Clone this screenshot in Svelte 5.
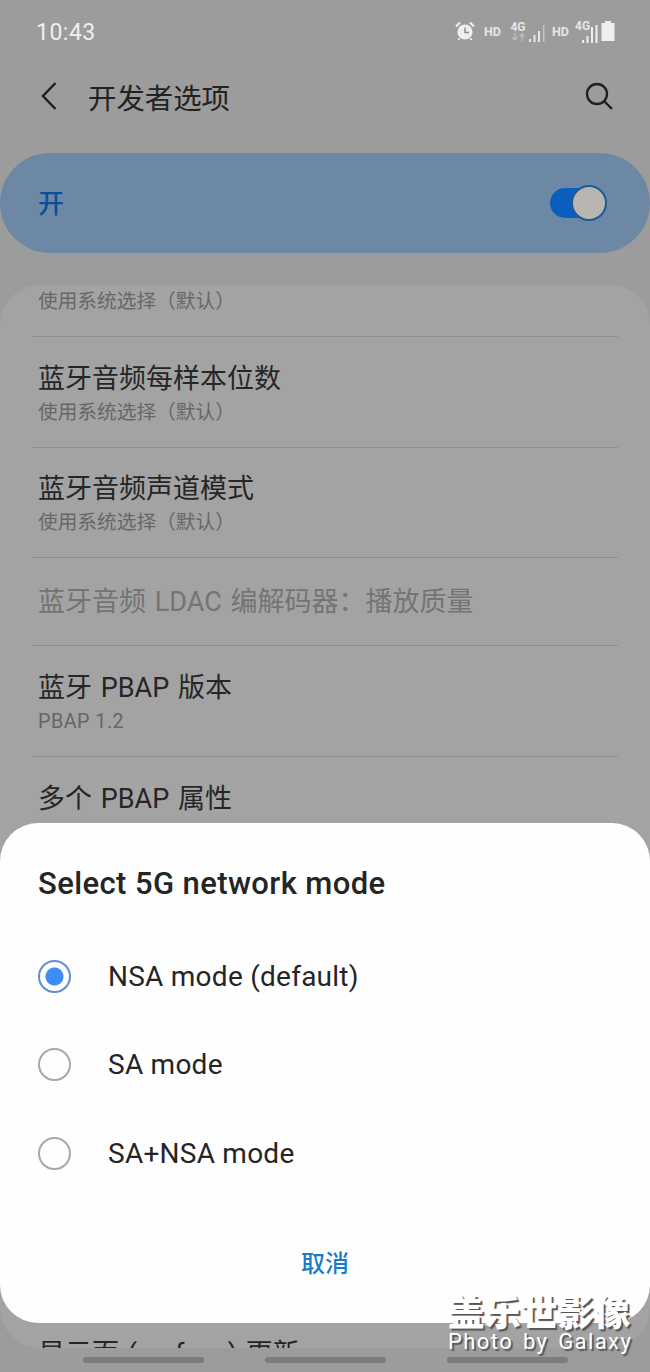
<script>
  const rows = [
    { title: '蓝牙音频每样本位数', sub: '使用系统选择（默认）' },
    { title: '蓝牙音频声道模式', sub: '使用系统选择（默认）', tight: true },
    { title: '蓝牙音频 LDAC 编解码器：播放质量', disabled: true },
    { title: '蓝牙 PBAP 版本', sub: 'PBAP 1.2', latin: true },
    { title: '多个 PBAP 属性', sub: '' }
  ];
  const modes = ['NSA mode (default)', 'SA mode', 'SA+NSA mode'];
  let selected = $state(0);
</script>

<div class="screen">
  <div class="status">
    <span class="time">10:43</span>
    <div class="icons">
      <svg class="alarm" width="20" height="20" viewBox="0 0 20 20">
        <circle cx="10" cy="11" r="7.6" fill="#efefef"/>
        <path d="M1 5.500 5 1.500M19 5.500 15 1.500M4.500 17.500 3.500 19M15.500 17.500 16.500 19" stroke="#efefef" stroke-width="2.200" fill="none"/>
        <path d="M10 6.500V11.500H14" stroke="#8f8f8f" stroke-width="1.500" fill="none"/>
      </svg>
      <span class="hd first">HD</span>
      <div class="net">
        <span class="g">4G</span>
        <svg width="15" height="8" viewBox="0 0 15 8"><path d="M4 0V7M1.500 4.500 4 7 6.500 4.500" stroke="#bdbdbd" stroke-width="1.400" fill="none"/><path d="M11 8V1M8.500 3.500 11 1 13.500 3.500" stroke="#bdbdbd" stroke-width="1.400" fill="none"/></svg>
      </div>
      <svg class="bars" width="18" height="18" viewBox="0 0 18 18"><path d="M1 18V15H3V18ZM5.500 18V11H7.500V18ZM10 18V7H12V18Z" fill="#e6e6e6"/><path d="M15 18V1H16.500V18Z" fill="#c4c4c4"/></svg>
      <span class="hd second">HD</span>
      <div class="net overlap">
        <span class="g">4G</span>
        <svg class="bars2" width="18" height="19" viewBox="0 0 18 19"><path d="M1 19V16H3V19ZM5.500 19V12H7.500V19ZM10 19V3H12V19ZM14.500 19V1H16.500V19Z" fill="#efefef"/></svg>
      </div>
      <svg class="battery" width="14" height="20" viewBox="0 0 14 20"><path d="M4 0H10V2H13.500V20H.5V2H4Z" fill="#efefef"/></svg>
    </div>
  </div>

  <header class="bar">
    <svg class="back" width="18" height="30" viewBox="0 0 18 30"><path d="M15.500 2 3 15 15.500 28" stroke="#1f1f1f" stroke-width="2.400" fill="none"/></svg>
    <h1>开发者选项</h1>
    <svg class="search" width="28" height="28" viewBox="0 0 28 28"><circle cx="12" cy="12" r="10" stroke="#1f1f1f" stroke-width="2.300" fill="none"/><path d="M19.500 19.500 27 27" stroke="#1f1f1f" stroke-width="2.400" fill="none"/></svg>
  </header>

  <div class="master">
    <span>开</span>
    <div class="toggle"><div class="thumb"></div></div>
  </div>

  <section class="list">
    <div class="row partial"><span class="sub">使用系统选择（默认）</span></div>
    {#each rows as row}
      <div class="row" class:short={row.disabled} class:tight={row.tight}>
        <span class="title" class:off={row.disabled}>{row.title}</span>
        {#if !row.disabled}<span class="sub" class:latin={row.latin}>{row.sub}</span>{/if}
      </div>
    {/each}
    <div class="hidden-rows"></div>
    <div class="row last"><span class="title">显示面 (surface) 更新</span></div>
  </section>

  <nav class="navbar">
    <i></i><i></i><i></i>
  </nav>

  <div class="sheet">
    <h2>Select 5G network mode</h2>
    {#each modes as mode, i}
      <button class="mode" onclick={() => (selected = i)}>
        <span class="radio" class:on={selected === i}></span>
        <span>{mode}</span>
      </button>
    {/each}
    <button class="cancel">取消</button>
  </div>

  <div class="mark">
    <div class="cn">盖乐世影像</div>
    <div class="en">Photo by Galaxy</div>
  </div>
</div>

<style>
  :global(body) { margin: 0; background: #9c9c9c; }
  .screen {
    position: relative; width: 650px; height: 1372px; overflow: hidden; background: #9c9c9c;
    display: flex; flex-direction: column;
    font-family: Roboto, "Noto Sans CJK SC", sans-serif;
  }
  .status { height: 62px; display: flex; justify-content: space-between; align-items: center; padding: 0 35px 0 36px; box-sizing: border-box; flex: none; }
  .time { font-size: 23px; color: #efefef; letter-spacing: .5px; padding-top: 3px; }
  .icons { display: flex; align-items: center; height: 24px; }
  .hd { font-size: 12.500px; font-weight: 700; color: #e6e6e6; width: 18px; }
  .hd.first { margin-left: 9px; }
  .hd.second { margin-left: 6px; }
  .net { position: relative; display: flex; flex-direction: column; align-items: center; margin-left: 8px; width: 16px; }
  .net .g { font-size: 12px; font-weight: 700; color: #e6e6e6; line-height: 12px; }
  .net svg { display: block; }
  .overlap { margin-left: 3px; width: 24px; align-items: flex-start; height: 24px; padding-left: 2px; box-sizing: border-box; }
  .overlap .g { margin-top: 1px; }
  .bars { margin-left: 2px; margin-top: 4px; }
  .bars2 { position: absolute; left: 8px; top: 5px; }
  .alarm { margin-top: -1px; }
  .battery { margin-left: 4px; }
  .bar { height: 68px; display: flex; align-items: center; padding: 0 37px 0 40px; flex: none; }
  .back { flex: none; }
  h1 { margin: 0 0 0 30px; font-size: 28.400px; font-weight: 400; color: #222; flex: 1; }
  .search { flex: none; }
  .master {
    margin-top: 23px; height: 100px; flex: none; border-radius: 50px; background: #6d88a5;
    display: flex; align-items: center; justify-content: space-between; padding: 0 46px 0 38px;
  }
  .master span { font-size: 26px; line-height: 36px; font-weight: 500; color: #0b4f9c; padding-top: 2px; }
  .toggle { position: relative; width: 54px; height: 30px; border-radius: 15px; background: #0a5fbe; }
  .thumb { position: absolute; right: -3px; top: -3px; width: 32px; height: 32px; border-radius: 50%; background: #b9b6b2; border: 2px solid #1f5a96; }
  .list {
    margin-top: 32px; height: 1063px; flex: none; background: #a3a3a3; border-radius: 40px;
    overflow: hidden; display: flex; flex-direction: column; padding: 0 32px; box-sizing: border-box;
  }
  .row {
    height: 111px; box-sizing: border-box; padding: 1px 6px 0; border-top: 1px solid #8f8f8f; flex: none;
    display: flex; flex-direction: column; justify-content: center; gap: 2px;
  }
  .row.tight { height: 110px; }
  .row.partial { height: 51px; border-top: 0; justify-content: flex-start; padding-top: 4px; }
  .row.short { height: 88px; }
  .row.last { justify-content: flex-start; padding-top: 24px; border-top: 0; }
  .hidden-rows { height: 444px; flex: none; }
  .title { font-size: 27px; line-height: 38px; color: #262626; white-space: nowrap; word-spacing: 2px; }
  .title.off { color: #747474; }
  .sub { font-size: 19.700px; line-height: 26px; min-height: 26px; color: #676767; white-space: nowrap; }
  .sub.latin { letter-spacing: .5px; }
  .navbar { flex: 1; display: flex; justify-content: center; gap: 61px; padding-top: 9px; box-sizing: border-box; }
  .navbar i { display: block; width: 121px; height: 6px; border-radius: 3px; background: #7c7c7c; }
  .sheet {
    position: absolute; left: 0; right: 0; top: 823px; height: 500px; box-sizing: border-box;
    background: #fefefe; border-radius: 38px; padding: 0 38px;
    display: flex; flex-direction: column;
  }
  h2 { margin: 39px 0 0; font-size: 31px; line-height: 44px; font-weight: 500; letter-spacing: .4px; color: #252525; white-space: nowrap; }
  .mode {
    all: unset; display: flex; align-items: center; height: 88.500px; gap: 37px;
    font-size: 28px; letter-spacing: .25px; color: #252525; white-space: nowrap;
  }
  .mode:first-of-type { margin-top: 26px; }
  .radio { width: 33px; height: 33px; box-sizing: border-box; border: 2px solid #a8a8a8; border-radius: 50%; flex: none; }
  .radio.on { border-color: #5e8fd0; background: radial-gradient(circle, #3f8cf6 0 8.500px, transparent 9.500px); }
  .cancel {
    all: unset; align-self: center; margin-top: 49px; font-size: 24px; font-weight: 500; color: #1a7cc8; line-height: 34px;
  }
  .mark {
    position: absolute; left: 448px; top: 1296px; width: 186px; color: #fff; pointer-events: none;
    text-shadow: 2px 2px 1px #555;
  }
  .cn { font-size: 36.500px; line-height: 36px; font-weight: 900; white-space: nowrap; }
  .en { font-size: 22px; line-height: 26px; letter-spacing: 1.400px; word-spacing: 3px; white-space: nowrap; margin-top: -3px; }
</style>
